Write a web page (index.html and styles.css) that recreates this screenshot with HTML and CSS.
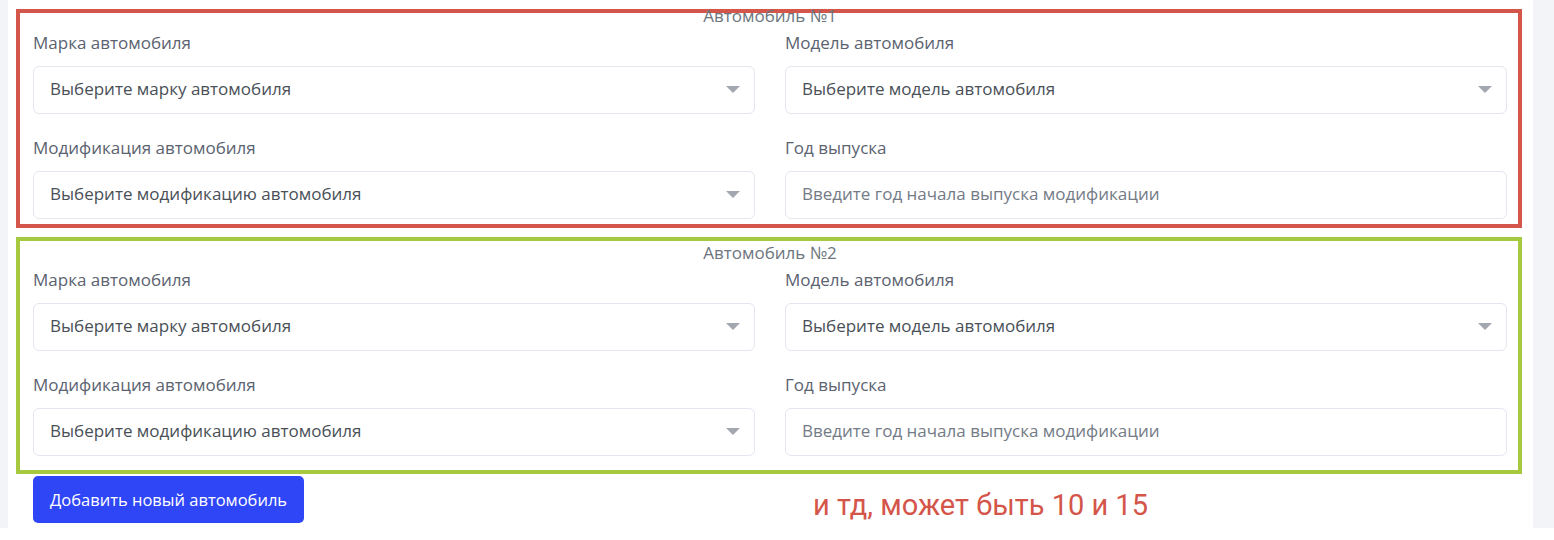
FILE: index.html
```html
<!DOCTYPE html>
<html lang="ru">
    <head>
        <meta charset="utf-8">
        <title>Автомобили</title>
        <link rel="stylesheet" href="styles.css">
    </head>
    <body>
        <div class="page">
            <div class="card">
                <!-- first car -->
                <section class="car car--first">
                    <div class="car-title">Автомобиль №1</div>
                    <div class="car-grid">
                        <div class="field">
                            <label class="field-label">Марка автомобиля</label>
                            <div class="select-wrap">
                                <select class="control"><option>Выберите марку автомобиля</option></select>
                                <svg class="caret" width="14" height="7" viewBox="0 0 14 7"><path d="M0 0H14L7 7Z"/></svg>
                            </div>
                        </div>
                        <div class="field">
                            <label class="field-label">Модель автомобиля</label>
                            <div class="select-wrap">
                                <select class="control"><option>Выберите модель автомобиля</option></select>
                                <svg class="caret" width="14" height="7" viewBox="0 0 14 7"><path d="M0 0H14L7 7Z"/></svg>
                            </div>
                        </div>
                        <div class="field">
                            <label class="field-label">Модификация автомобиля</label>
                            <div class="select-wrap">
                                <select class="control"><option>Выберите модификацию автомобиля</option></select>
                                <svg class="caret" width="14" height="7" viewBox="0 0 14 7"><path d="M0 0H14L7 7Z"/></svg>
                            </div>
                        </div>
                        <div class="field">
                            <label class="field-label">Год выпуска</label>
                            <input class="control" type="text" placeholder="Введите год начала выпуска модификации">
                        </div>
                    </div>
                </section>

                <!-- second car -->
                <section class="car car--second">
                    <div class="car-title">Автомобиль №2</div>
                    <div class="car-grid">
                        <div class="field">
                            <label class="field-label">Марка автомобиля</label>
                            <div class="select-wrap">
                                <select class="control"><option>Выберите марку автомобиля</option></select>
                                <svg class="caret" width="14" height="7" viewBox="0 0 14 7"><path d="M0 0H14L7 7Z"/></svg>
                            </div>
                        </div>
                        <div class="field">
                            <label class="field-label">Модель автомобиля</label>
                            <div class="select-wrap">
                                <select class="control"><option>Выберите модель автомобиля</option></select>
                                <svg class="caret" width="14" height="7" viewBox="0 0 14 7"><path d="M0 0H14L7 7Z"/></svg>
                            </div>
                        </div>
                        <div class="field">
                            <label class="field-label">Модификация автомобиля</label>
                            <div class="select-wrap">
                                <select class="control"><option>Выберите модификацию автомобиля</option></select>
                                <svg class="caret" width="14" height="7" viewBox="0 0 14 7"><path d="M0 0H14L7 7Z"/></svg>
                            </div>
                        </div>
                        <div class="field">
                            <label class="field-label">Год выпуска</label>
                            <input class="control" type="text" placeholder="Введите год начала выпуска модификации">
                        </div>
                    </div>
                </section>

                <div class="actions">
                    <button class="btn-add" type="button">Добавить новый автомобиль</button>
                    <span class="note">и тд, может быть 10 и 15</span>
                </div>
            </div>
        </div>
    </body>
</html>
```

FILE: styles.css
```css
html, body {
    margin: 0;
    background: #fff;
}

body {
    font-family: "Open Sans", "Noto Sans", sans-serif;
    font-size: 17px;
    color: #495057;
}

/* grey back of the admin page, white card on it */
.page {
    height: 528px;
    background: #f3f4f8;
    padding: 0 21px 0 8px;
    box-sizing: border-box;
    overflow: hidden;
}

.card {
    height: 100%;
    background: #fff;
    padding: 9px 11px 0 8px;
    box-sizing: border-box;
}

/* one block per car */
.car {
    border: 4px solid;
    padding: 0 11px 0 13px;
}

.car--first {
    border-color: #d4554a;
    padding-bottom: 5px;
}

.car--first .car-title {
    margin-top: -9px;
}

.car--second {
    border-color: #a6c93f;
    margin-top: 9px;
    padding-bottom: 14px;
}

.car-title {
    text-align: center;
    line-height: 24px;
    color: #6c757d;
}

.car-grid {
    margin-top: 4px;
    display: grid;
    grid-template-columns: 1fr 1fr;
    column-gap: 30px;
    row-gap: 23px;
}

.field-label {
    display: block;
    line-height: 21px;
    margin-bottom: 13px;
    color: #5b6270;
}

.select-wrap {
    position: relative;
}

.control {
    display: block;
    width: 100%;
    height: 48px;
    box-sizing: border-box;
    padding: 0 16px 3px;
    border: 1px solid #e4e6ef;
    border-radius: 6px;
    background: #fff;
    font: inherit;
    color: #495057;
    appearance: none;
    outline: none;
}

.control::placeholder {
    color: #737b86;
}

.caret {
    position: absolute;
    right: 15px;
    top: 20px;
    fill: #a3a8b0;
    pointer-events: none;
}

/* bottom row: button and a note */
.actions {
    display: flex;
    align-items: flex-start;
    margin-top: 2px;
    padding-left: 17px;
}

.btn-add {
    height: 47px;
    padding: 0 17px;
    border: none;
    border-radius: 5px;
    background: #2f46f7;
    color: #fff;
    font: inherit;
    font-size: 16.5px;
    cursor: pointer;
}

.note {
    margin: 15px 0 0 509px;
    font-family: Roboto, sans-serif;
    font-size: 29px;
    line-height: 29px;
    color: #d4554a;
}
```
